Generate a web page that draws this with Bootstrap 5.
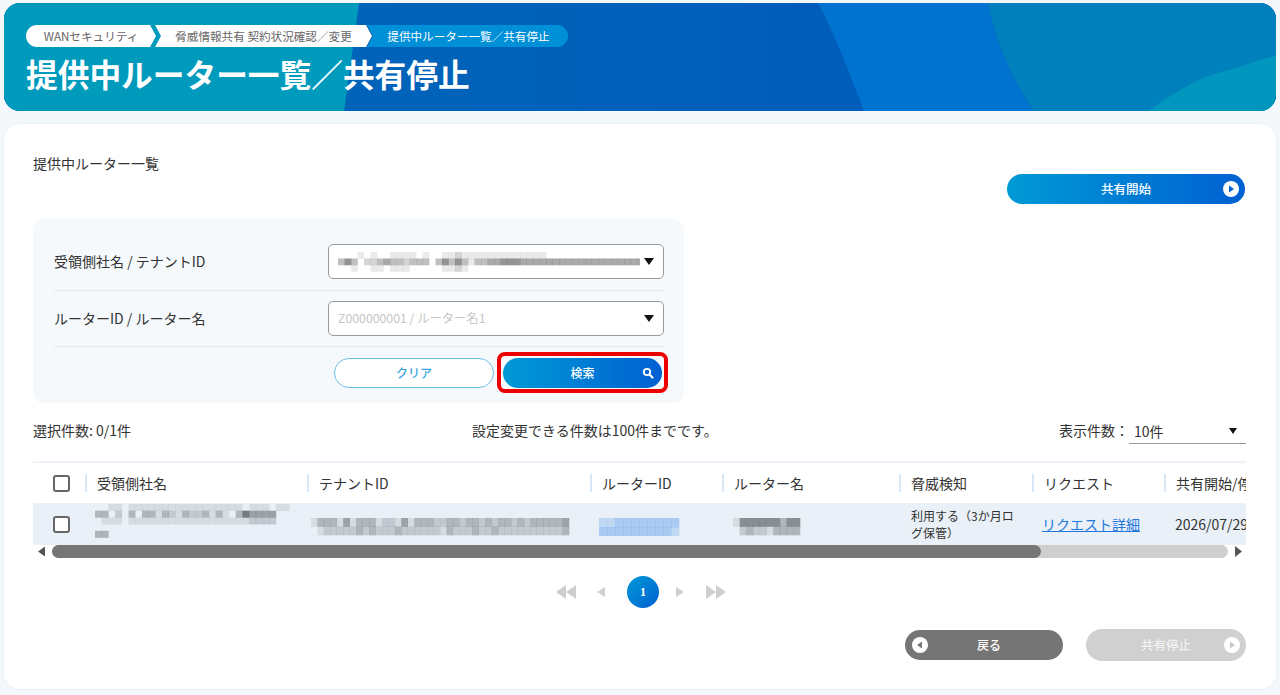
<!DOCTYPE html>
<html lang="ja">
<head>
<meta charset="utf-8">
<title>提供中ルーター一覧／共有停止</title>
<link href="https://cdn.jsdelivr.net/npm/bootstrap@5.3.0/dist/css/bootstrap.min.css" rel="stylesheet">
<style>
html,body{height:100%}
body{background:#f4f8fb;font-family:"Noto Sans CJK JP","Noto Sans",sans-serif;color:#333;font-size:14px;overflow:hidden}
.pg{padding:3px 4px 0}
.hero{height:108px;border-radius:16px;overflow:hidden;background:#0060bc;padding:22px 22px 0}
.hero-bg{left:0;top:0;width:100%;height:100%}
.crumbs{height:22px;font-size:11.6px;line-height:22px;color:#666}
.cr{height:22px;text-align:center;white-space:nowrap;flex:none}
.cr1{width:130px;background:#fff;border-radius:11px 0 0 11px;clip-path:polygon(0 0,124px 0,130px 50%,124px 100%,0 100%)}
.cr2{width:217px;margin-left:-1px;background:#fff;clip-path:polygon(0 0,211px 0,217px 50%,211px 100%,0 100%,6px 50%)}
.cr3{width:201px;margin-left:-5px;background:#0090d8;color:#fff;border-radius:0 11px 11px 0;clip-path:polygon(0 0,201px 0,201px 100%,0 100%,6px 50%);padding-left:2px}
.ttl{font-size:31.7px;font-weight:700;color:#fff;line-height:46px;margin:3px 0 0;white-space:nowrap}
.sheet{margin-top:13px;height:565px;background:#fff;border-radius:16px;padding:29px 30px 0 29px;box-shadow:0 0 3px #e6ecf3}
.sub{font-size:14px;line-height:20px;white-space:nowrap}
.gbtn{background:linear-gradient(90deg,#009ad6,#0060d2);color:#fff;border:0;border-radius:16px;height:30px;font-size:12.5px;font-weight:500;padding:0}
.b-start{width:238px;margin:1px 1px 0 0}
.ic{right:5px;top:50%;transform:translateY(-50%);width:18px;height:18px}
.panel{margin-top:15px;height:184px;width:651px;background:#f5f9fc;border-radius:11px;padding:25px 20px 0 21px}
.frow{padding-bottom:10px;border-bottom:1px solid #e3e8ed;margin-bottom:10px}
.frow:first-child{padding-bottom:11px}
.flab{width:274px;font-size:14px}
.fsel{width:336px;height:35px;background:#fff;border:1.5px solid #9a9a9a;border-radius:5px;padding:0 9px}
.ph{font-size:12.3px;color:#c6c6c6;white-space:nowrap}
.tri{width:0;height:0;border-left:5px solid transparent;border-right:5px solid transparent;border-top:7px solid #111;flex:none}
.fill{flex:1 1 auto;min-width:0}
.bclear{width:160px;height:30px;background:#fff;border:1.5px solid #6cc0e8;border-radius:16px;color:#3aa7dc;font-size:12px;font-weight:500;padding:0}
.acts{gap:9px;padding-right:2px;margin-top:11px}
.bsearch{width:159px;font-size:12px}
.redbox{left:-6px;right:-6px;top:-6px;bottom:-5px;border:4px solid #ec0000;border-radius:8px;pointer-events:none}
.bar{margin-top:18px;height:23px;font-size:14px;line-height:18px}
.bar-l{width:439px}
.bar-r{width:187px;font-size:14px;white-space:nowrap}
.cnt{width:117px;height:23px;border-bottom:1.5px solid #999;padding:0 9px 2px 5px;flex:none}
.cnt .tri{border-left-width:4.5px;border-right-width:4.5px;border-top-width:6px}
.tw{margin-top:17px;border-top:2px solid #edf3f9;overflow:hidden;width:1213px}
.tbl{table-layout:fixed;width:1320px;margin:0;border-collapse:collapse}
.tbl th,.tbl td{padding:0;border:0;vertical-align:middle;background:transparent;box-shadow:none;color:#333}
.tbl th{height:40px;font-weight:400;font-size:14px;white-space:nowrap}
.sep{border-left:2px solid #d8e8f6;padding-left:10px;line-height:18px;height:18px}
.r1{background:#e9f0f7}
.tbl .r1 td{height:42px;overflow:hidden}
.cb.form-check-input{width:17px;height:17px;margin:0 0 0 20px;border:2px solid #666;border-radius:3px;display:block;float:none}
.tbl .r1 td.risk{font-size:12px;line-height:17px;padding-left:12px;padding-right:8px}
.tbl .r1 td.lnk{font-size:14px;padding-left:10px;white-space:nowrap}
.lnk a{color:#2277dd}
.tbl .r1 td.dt{font-size:14px;padding-left:11px;white-space:nowrap}
.sc{height:13px}
.sc-t{flex:1;height:13px;background:#cfcfcf;border-radius:7px;margin:0 4px 0 5px}
.sc-th{width:989px;height:13px;background:#767676;border-radius:7px}
.pgn{margin-top:18px;height:32px;margin-left:523px}
.pgn svg{display:block}
.g20{margin-left:20px}
.g21{margin-left:21px}
.g16{margin-left:16px}
.cur{width:32px;height:32px;border-radius:50%;background:linear-gradient(135deg,#009ad6,#0060d2);color:#fff;font-size:12px;font-family:"Liberation Serif",serif;font-weight:700;border:0;padding:0}
.foot{margin-top:21px;height:32px;gap:23px}
.bback{width:158px;height:30px;background:#757575;color:#fff;border:0;border-radius:16px;font-size:12px;font-weight:500;padding:0 0 0 10px}
.bstop{width:160px;height:32px;background:#d0d0d0;color:#f2f2f2;border:0;border-radius:16px;font-size:12.5px;font-weight:500;padding:0;opacity:1}
.ic-l{left:6px;right:auto}
.blur{display:block;filter:blur(.7px)}
.o10{margin-left:10px}
.o4{margin-left:4px}
.o9{margin-left:9px}
.o11{margin-left:11px}
.dn{margin-top:6px}
</style>
</head>
<body>
<div class="pg">
  <header class="hero position-relative">
    <svg class="hero-bg position-absolute" viewBox="0 0 1272 108" preserveAspectRatio="none" aria-hidden="true">
      <defs><linearGradient id="gb" x1="0" x2="1" y1="0" y2="0"><stop offset="0" stop-color="#0068b8"/><stop offset="1" stop-color="#0058bc"/></linearGradient></defs>
      <rect width="1272" height="108" fill="url(#gb)"/>
      <path d="M0 0H355L340 108H0Z" fill="#009abd"/>
      <path d="M814 0C834 38 846 72 860 108H1030C1005 72 992 38 984 0Z" fill="#0072d0"/>
      <path d="M984 0C992 38 1005 72 1030 108H1272V0Z" fill="#0080bc"/>
      <path d="M1144 108C1170 90 1190 78 1207 72C1230 66 1250 58 1272 53V108Z" fill="#0096bd"/>
    </svg>
    <div class="position-relative">
      <div class="crumbs d-flex">
        <div class="cr cr1">WANセキュリティ</div>
        <div class="cr cr2">脅威情報共有 契約状況確認／変更</div>
        <div class="cr cr3">提供中ルーター一覧／共有停止</div>
      </div>
      <h1 class="ttl">提供中ルーター一覧／共有停止</h1>
    </div>
  </header>

  <main class="sheet">
    <div class="sub">提供中ルーター一覧</div>
    <div class="d-flex justify-content-end">
      <button class="gbtn b-start position-relative" type="button">共有開始
        <svg class="ic position-absolute" viewBox="0 0 18 18"><circle cx="9" cy="9" r="8" fill="#fff"/><path d="M7 5.5 12 9 7 12.5Z" fill="#0060d2"/></svg>
      </button>
    </div>

    <section class="panel">
      <div class="frow d-flex align-items-center">
        <div class="flab">受領側社名 / テナントID</div>
        <div class="fsel d-flex align-items-center">
          <div class="fill"><svg class="blur js-blur" width="302" height="20" data-w="6.5" data-h="6.5" data-c="90,90,90" data-rows="0,0,0,1,0,1,0,0,1,1,1,1,0,1,0,0,1,1,2,1,1,1,1,1,1,1,1,1,1,1,1,1,0,0,0,0,0,0,0,0,0,0,0,0,0,0,0|3,5,3,0,2,2,3,4,3,3,2,3,3,3,0,3,5,3,5,3,1,3,3,4,4,5,5,5,4,4,4,4,4,4,4,4,4,4,4,4,4,4,4,4,4,4,4|0,0,1,0,0,1,1,0,1,1,1,0,0,0,0,0,1,1,2,1,0,0,0,0,0,0,0,0,0,0,0,0,0,0,0,0,0,0,0,0,0,0,0,0,0,0,0"></svg></div>
          <span class="tri"></span>
        </div>
      </div>
      <div class="frow d-flex align-items-center">
        <div class="flab">ルーターID / ルーター名</div>
        <div class="fsel d-flex align-items-center">
          <div class="fill ph">Z000000001 / ルーター名1</div>
          <span class="tri"></span>
        </div>
      </div>
      <div class="acts d-flex justify-content-end">
        <button class="bclear" type="button">クリア</button>
        <div class="position-relative">
          <button class="gbtn bsearch position-relative" type="button">検索
            <svg class="ic position-absolute" viewBox="0 0 18 18"><circle cx="8" cy="8" r="3.2" fill="none" stroke="#fff" stroke-width="1.8"/><path d="M10.5 10.5 13.5 13.5" stroke="#fff" stroke-width="2.2" stroke-linecap="round"/></svg>
          </button>
          <span class="redbox position-absolute"></span>
        </div>
      </div>
    </section>

    <div class="bar d-flex align-items-start">
      <div class="bar-l">選択件数: 0/1件</div>
      <div class="fill">設定変更できる件数は100件までです。</div>
      <div class="bar-r d-flex justify-content-end align-items-start">
        <span>表示件数：</span>
        <div class="cnt d-flex justify-content-between align-items-center"><span>10件</span><span class="tri"></span></div>
      </div>
    </div>

    <div class="tw">
      <table class="table tbl">
        <colgroup><col style="width:52px"><col style="width:222px"><col style="width:283px"><col style="width:132px"><col style="width:177px"><col style="width:133px"><col style="width:132px"><col style="width:189px"></colgroup>
        <thead><tr>
          <th><input class="form-check-input cb" type="checkbox" aria-label="all"></th>
          <th><div class="sep">受領側社名</div></th>
          <th><div class="sep">テナントID</div></th>
          <th><div class="sep">ルーターID</div></th>
          <th><div class="sep">ルーター名</div></th>
          <th><div class="sep">脅威検知</div></th>
          <th><div class="sep">リクエスト</div></th>
          <th><div class="sep">共有開始/停止日</div></th>
        </tr></thead>
        <tbody><tr class="r1">
          <td><input class="form-check-input cb" type="checkbox" aria-label="row"></td>
          <td><svg class="blur js-blur o10" width="204" height="40" data-w="6.7" data-h="6.7" data-c="85,90,95" data-rows="0,0,1,1,0,1,1,1,1,1,1,1,1,1,1,1,1,1,1,1,1,1,0,1,1,1,0,1,1,0|3,3,0,2,0,3,0,3,3,1,3,2,1,3,2,2,3,1,3,1,0,3,6,4,4,4,4,0,0,0|0,1,1,1,0,1,1,1,1,1,1,1,1,1,1,1,1,1,1,1,1,1,1,2,2,2,2,0,0,0|0,0,0,0,0,0,0,0,0,0,0,0,0,0,0,0,0,0,0,0,0,0,0,0,0,0,0,0,0,0|3,3,0,0,0,0,0,0,0,0,0,0,0,0,0,0,0,0,0,0,0,0,0,0,0,0,0,0,0,0"></svg></td>
          <td><svg class="blur js-blur o4 dn" width="260" height="18" data-w="6.45" data-h="8.5" data-c="85,90,95" data-rows="1,3,3,3,1,4,1,3,3,3,1,2,2,1,4,1,3,3,3,2,2,3,3,2,3,3,2,3,2,3,3,2,3,2,3,3,3,3,3,4|0,1,2,2,2,2,2,3,2,3,2,2,2,3,2,2,2,2,2,2,1,3,2,2,2,3,2,2,3,2,2,2,2,2,2,2,2,2,2,3"></svg></td>
          <td><svg class="blur js-blur o9 dn" width="82" height="18" data-w="8" data-h="9" data-c="70,145,235" data-rows="2,2,3,3,3,3,3,3,3,3|3,3,3,3,3,3,3,3,3,2"></svg></td>
          <td><svg class="blur js-blur o11 dn" width="68" height="18" data-w="6.7" data-h="8.5" data-c="85,90,95" data-rows="1,5,5,5,5,5,5,3,5,5|0,2,3,2,2,1,3,3,3,3"></svg></td>
          <td class="risk">利用する（3か月ログ保管）</td>
          <td class="lnk"><a href="#">リクエスト詳細</a></td>
          <td class="dt">2026/07/29 12:00</td>
        </tr></tbody>
      </table>
    </div>
    <div class="sc d-flex align-items-center">
      <svg width="14" height="13" viewBox="0 0 14 13"><path d="M12 1.5V11.5L5 6.5Z" fill="#555"/></svg>
      <div class="sc-t"><div class="sc-th"></div></div>
      <svg width="14" height="13" viewBox="0 0 14 13"><path d="M3 1V12L10 6.5Z" fill="#555"/></svg>
    </div>

    <nav class="pgn d-flex align-items-center" aria-label="pages">
      <svg width="20" height="16" viewBox="0 0 20 16"><path d="M10 1V15L0 8ZM20 1V15L10 8Z" fill="#cfcfcf"/></svg>
      <svg class="g20" width="10" height="12" viewBox="0 0 10 12"><path d="M9 1V11L1 6Z" fill="#cfcfcf"/></svg>
      <button class="cur g21" type="button">1</button>
      <svg class="g16" width="10" height="12" viewBox="0 0 10 12"><path d="M1 1V11L9 6Z" fill="#cfcfcf"/></svg>
      <svg class="g21" width="20" height="16" viewBox="0 0 20 16"><path d="M0 1V15L10 8ZM10 1V15L20 8Z" fill="#cfcfcf"/></svg>
    </nav>

    <div class="foot d-flex justify-content-end align-items-center">
      <button class="bback position-relative" type="button">戻る
        <svg class="ic ic-l position-absolute" viewBox="0 0 18 18"><circle cx="9" cy="9" r="8" fill="#fff"/><path d="M11 5.5 6 9 11 12.5Z" fill="#757575"/></svg>
      </button>
      <button class="bstop position-relative" type="button" disabled>共有停止
        <svg class="ic position-absolute" viewBox="0 0 18 18"><circle cx="9" cy="9" r="8" fill="#fff"/><path d="M7 5.5 12 9 7 12.5Z" fill="#c8c8c8"/></svg>
      </button>
    </div>
  </main>
</div>
<script src="https://cdn.jsdelivr.net/npm/bootstrap@5.3.0/dist/js/bootstrap.bundle.min.js"></script>
<script>
document.querySelectorAll('.js-blur').forEach(function(s){
  var w=+s.dataset.w,h=+s.dataset.h,c=s.dataset.c,out='';
  s.dataset.rows.split('|').forEach(function(r,y){
    r.split(',').forEach(function(v,x){
      if(+v>0) out+='<rect x="'+(x*w)+'" y="'+(y*h)+'" width="'+(w+.3)+'" height="'+(h+.3)+'" fill="rgb('+c+')" fill-opacity="'+(v*0.13).toFixed(2)+'"/>';
    });
  });
  s.innerHTML=out;
});
</script>
</body>
</html>
